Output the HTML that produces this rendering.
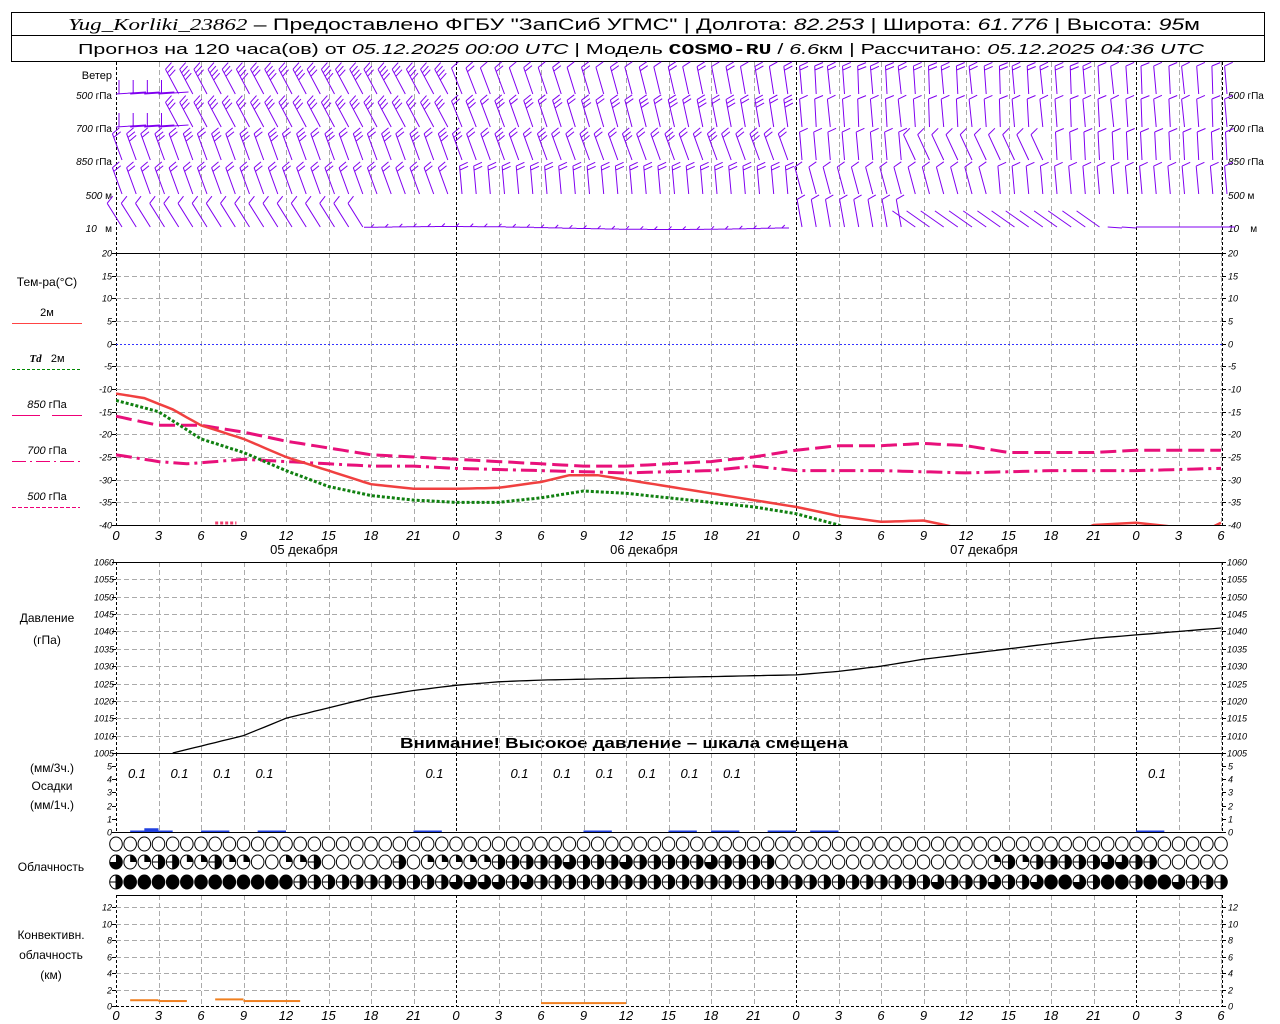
<!DOCTYPE html>
<html><head><meta charset="utf-8">
<style>
html,body{margin:0;padding:0;background:#fff;width:1280px;height:1024px;overflow:hidden}
svg{display:block}
text{font-family:"Liberation Sans","DejaVu Sans",sans-serif;fill:#000}
.it{font-style:italic}
.sm{font-size:10px}
.ax{font-size:9px;font-style:italic}
.hr{font-size:13px;font-style:italic}
</style></head><body>
<svg id="s" width="1280" height="1024" viewBox="0 0 1280 1024" xmlns="http://www.w3.org/2000/svg">
<rect x="11.5" y="12.5" width="1253" height="49" fill="none" stroke="#000"/>
<line x1="11" y1="35.5" x2="1265" y2="35.5" stroke="#000"/>
<text x="68" y="30" font-size="17" textLength="1132" lengthAdjust="spacingAndGlyphs"><tspan font-family="Liberation Serif,serif" font-style="italic">Yug_Korliki_23862</tspan> – Предоставлено ФГБУ "ЗапСиб УГМС" | Долгота: <tspan font-style="italic">82.253</tspan> | Широта: <tspan font-style="italic">61.776</tspan> | Высота: <tspan font-style="italic">95</tspan>м</text>
<text x="78" y="54" font-size="15" textLength="1126" lengthAdjust="spacingAndGlyphs">Прогноз на 120 часа(ов) от <tspan font-style="italic">05.12.2025 00:00 UTC</tspan> | Модель <tspan font-family="Liberation Mono,monospace" font-weight="bold">COSMO-RU</tspan> / <tspan font-style="italic">6.6</tspan>км | Рассчитано: <tspan font-style="italic">05.12.2025 04:36 UTC</tspan></text>

<g class="sm">
<text x="112" y="79" text-anchor="end" font-size="11">Ветер</text>
<text x="112" y="99" text-anchor="end" class="sm"><tspan font-style="italic">500</tspan> гПа</text>
<text x="112" y="132" text-anchor="end"><tspan font-style="italic">700</tspan> гПа</text>
<text x="112" y="165" text-anchor="end"><tspan font-style="italic">850</tspan> гПа</text>
<text x="112" y="199" text-anchor="end"><tspan font-style="italic">500</tspan> м</text>
<text x="112" y="232" text-anchor="end"><tspan font-style="italic">10</tspan>&#160;&#160; м</text>
<text x="1228" y="99"><tspan font-style="italic">500</tspan> гПа</text>
<text x="1228" y="132"><tspan font-style="italic">700</tspan> гПа</text>
<text x="1228" y="165"><tspan font-style="italic">850</tspan> гПа</text>
<text x="1228" y="199"><tspan font-style="italic">500</tspan> м</text>
<text x="1228" y="232"><tspan font-style="italic">10</tspan>&#160;&#160;&#160; м</text>
</g>

<g font-size="11">
<text x="47" y="286" text-anchor="middle" font-size="12">Тем-ра(°С)</text>
<text x="47" y="316" text-anchor="middle">2м</text>
<text x="47" y="362" text-anchor="middle"><tspan font-style="italic" font-weight="bold" font-family="Liberation Serif,serif">Td</tspan>&#160;&#160; 2м</text>
<text x="47" y="408" text-anchor="middle"><tspan font-style="italic">850</tspan> гПа</text>
<text x="47" y="454" text-anchor="middle"><tspan font-style="italic">700</tspan> гПа</text>
<text x="47" y="500" text-anchor="middle"><tspan font-style="italic">500</tspan> гПа</text>
<text x="47" y="622" text-anchor="middle" font-size="12">Давление</text>
<text x="47" y="644" text-anchor="middle" font-size="12">(гПа)</text>
<text x="52" y="772" text-anchor="middle" font-size="12">(мм/3ч.)</text>
<text x="52" y="790" text-anchor="middle" font-size="12">Осадки</text>
<text x="52" y="809" text-anchor="middle" font-size="12">(мм/1ч.)</text>
<text x="51" y="871" text-anchor="middle" font-size="12">Облачность</text>
<text x="51" y="939" text-anchor="middle" font-size="12">Конвективн.</text>
<text x="51" y="959" text-anchor="middle" font-size="12">облачность</text>
<text x="51" y="979" text-anchor="middle" font-size="12">(км)</text>
</g>
<g stroke-width="1">
<line x1="12" y1="323.5" x2="82" y2="323.5" stroke="#f44"/>
<line x1="12" y1="369.5" x2="80" y2="369.5" stroke="#080" stroke-dasharray="3,2"/>
<line x1="12" y1="415.5" x2="40" y2="415.5" stroke="#e07"/><line x1="52" y1="415.5" x2="82" y2="415.5" stroke="#e07"/>
<line x1="12" y1="461.5" x2="80" y2="461.5" stroke="#e07" stroke-dasharray="14,4,2,4"/>
<line x1="12" y1="507.5" x2="80" y2="507.5" stroke="#e07" stroke-dasharray="4,2"/>
</g>
<text x="400" y="748" font-size="15" font-weight="bold" textLength="448" lengthAdjust="spacingAndGlyphs">Внимание! Высокое давление – шкала смещена</text>
<text x="304" y="554" text-anchor="middle" font-size="13">05 декабря</text>
<text x="644" y="554" text-anchor="middle" font-size="13">06 декабря</text>
<text x="984" y="554" text-anchor="middle" font-size="13">07 декабря</text>
<g id="dyn"></g>
</svg>
<script>
(function(){
var NS="http://www.w3.org/2000/svg",g=document.getElementById("dyn");
function el(t,a,txt){var e=document.createElementNS(NS,t);for(var k in a)e.setAttribute(k,a[k]);if(txt!=null)e.textContent=txt;g.appendChild(e);return e;}
function X(h){return 116+h*14.1667;}
function line(x1,y1,x2,y2,c,da,w){var a={x1:x1,y1:y1,x2:x2,y2:y2,stroke:c,"stroke-width":w||1};if(da)a["stroke-dasharray"]=da;return el("line",a);}
var GR="#aaa";
// panels vertical grid
var spans=[[62,253],[253,525],[562,753],[753,832],[895,1006]];
for(var h=0;h<=78;h+=3){var x=Math.round(X(h))+.5;var day=(h%24==0);
 spans.forEach(function(s){line(x,s[0],x,s[1],day?"#000":GR,day?"3,2":"5,3");});}
// right border
[[62,253],[253,525],[562,753],[753,832],[895,1006]].forEach(function(s){line(1222.5,s[0],1222.5,s[1],"#000","3,2");});
// temp grid
function TY(t){return 343.7-t*4.533;}
for(var t=-40;t<=20;t+=5){var y=Math.round(TY(t))+.5;
 if(t==0)line(116,y,1222,y,"#33f","2,2");else if(t>-40&&t<20)line(116,y,1222,y,GR,"5,3");
 line(112,y,116,y,"#000");line(1222,y,1226,y,"#000");
 el("text",{x:112,y:y+3,"text-anchor":"end","class":"ax"},t);el("text",{x:1228,y:y+3,"class":"ax"},t);}
line(116,253.5,1222,253.5,"#000");line(116,525.5,1222,525.5,"#000");
// pressure
function PY(p){return 753-(p-1005)*3.4727;}
for(var p=1005;p<=1060;p+=5){var y=Math.round(PY(p))+.5;
 if(p>1005&&p<1060)line(116,y,1222,y,GR,"5,3");
 line(112,y,116,y,"#000");line(1222,y,1226,y,"#000");
 el("text",{x:114,y:y+3,"text-anchor":"end","class":"ax","font-size":"8"},p);el("text",{x:1227,y:y+3,"class":"ax","font-size":"8"},p);}
line(116,562.5,1222,562.5,"#000");line(116,753.5,1222,753.5,"#000");
// precip
function RY(v){return 832-v*13.2;}
for(var v=0;v<=5;v++){var y=Math.round(RY(v))+.5;line(112,y,116,y,"#000");line(1222,y,1226,y,"#000");
 el("text",{x:112,y:y+3,"text-anchor":"end","class":"ax"},v);el("text",{x:1228,y:y+3,"class":"ax"},v);}
line(116,832.5,1222,832.5,"#000");
[0,3,6,9,21,27,30,33,36,39,42,72].forEach(function(h){el("text",{x:X(h)+21,y:778,"text-anchor":"middle","class":"hr","font-size":"12"},"0.1");});
[[1,4,1],[2,3,2.5],[6,8,1],[10,12,1],[21,23,1],[33,35,1],[39,41,1],[42,44,1],[46,48,1],[49,51,1],[72,74,1]].forEach(function(b){el("rect",{x:X(b[0]),y:832-b[2]*1.5,width:X(b[1])-X(b[0]),height:b[2]*1.5,fill:"#2040e0"});});
// conv
function CY(k){return 1006-k*8.25;}
for(var k=0;k<=12;k+=2){var y=Math.round(CY(k))+.5;if(k>0)line(116,y,1222,y,GR,"5,3");
 line(112,y,116,y,"#000");line(1222,y,1226,y,"#000");
 el("text",{x:112,y:y+3,"text-anchor":"end","class":"ax"},k);el("text",{x:1228,y:y+3,"class":"ax"},k);}
line(116,895.5,1222,895.5,"#000");line(116,1006.5,1222,1006.5,"#000","3,2");
[[1,3,.7],[3,5,.6],[7,9,.8],[9,13,.6],[30,36,.35]].forEach(function(b){el("rect",{x:X(b[0]),y:CY(b[2])-1,width:X(b[1])-X(b[0]),height:2,fill:"#f08020"});});
// hour labels
for(var h=0;h<=78;h+=3){var lab=h%24;el("text",{x:X(h),y:540,"text-anchor":"middle","class":"hr"},lab);el("text",{x:X(h),y:1020,"text-anchor":"middle","class":"hr"},lab);}
// curves
function interp(pts,h){for(var i=0;i<pts.length-1;i++){if(h>=pts[i][0]&&h<=pts[i+1][0]){var f=(h-pts[i][0])/(pts[i+1][0]-pts[i][0]);return pts[i][1]+f*(pts[i+1][1]-pts[i][1]);}}return null;}
function path(pts,fy,h0,h1){var d="";for(var h=h0;h<=h1+1e-6;h+=0.5){var v=interp(pts,h);if(v==null)continue;var y=fy(v);d+=(d?"L":"M")+X(h).toFixed(1)+","+y.toFixed(1);}return d;}
var cp=el("clipPath",{id:"tc"});var r=document.createElementNS(NS,"rect");r.setAttribute("x",116);r.setAttribute("y",253);r.setAttribute("width",1106);r.setAttribute("height",272);cp.appendChild(r);
var T2=[[0,-11],[2,-12],[4,-14.5],[6,-18],[9,-21],[12,-25],[15,-28],[18,-31],[21,-32],[24,-32],[27,-31.8],[30,-30.5],[32,-29],[34,-29],[36,-30],[39,-31.5],[42,-33],[45,-34.5],[48,-36],[51,-38],[54,-39.3],[57,-39],[60,-41],[66,-44],[69,-40],[72,-39.5],[75,-40.5],[77,-41],[78,-39.5]];
var TD=[[0,-12.5],[3,-15],[6,-21],[9,-24],[12,-28],[15,-31.5],[18,-33.5],[21,-34.5],[24,-35],[27,-35],[30,-34],[33,-32.5],[36,-33],[39,-34],[42,-35],[45,-36],[48,-37.5],[51,-40],[53,-43]];
var T85=[[0,-16],[3,-18],[6,-18],[9,-19.5],[12,-21.5],[15,-23],[18,-24.5],[21,-25],[24,-25.5],[27,-26],[30,-26.5],[33,-27],[36,-27],[39,-26.5],[42,-26],[45,-25],[48,-23.5],[51,-22.5],[54,-22.5],[57,-22],[60,-22.5],[63,-24],[66,-24],[69,-24],[72,-23.5],[75,-23.5],[78,-23.5]];
var T70=[[0,-24.5],[3,-26],[5,-26.5],[7,-26],[9,-25.5],[12,-26],[15,-26.5],[18,-27],[21,-27],[24,-27.5],[30,-28],[36,-28.5],[42,-28],[45,-27],[48,-28],[54,-28],[60,-28.5],[66,-28],[72,-28],[78,-27.5]];
function curve(pts,c,da,w){var a={d:path(pts,TY,0,78),fill:"none",stroke:c,"stroke-width":w,"clip-path":"url(#tc)"};if(da)a["stroke-dasharray"]=da;el("path",a);}
curve(T85,"#e8107a","16,6",3);
curve(T70,"#e8107a","16,5,3,5",3);
curve(TD,"#108010","3,2",3);
curve(T2,"#f04040",null,2.5);
el("path",{d:"M"+X(7)+",523L"+X(8.5)+",523",stroke:"#f04070","stroke-width":3,"stroke-dasharray":"3,2"});
// pressure
var PP=[[4,1005],[9,1010],[12,1015],[15,1018],[18,1021],[21,1023],[24,1024.5],[27,1025.5],[30,1026],[36,1026.5],[42,1027],[48,1027.5],[51,1028.5],[54,1030],[57,1032],[60,1033.5],[63,1035],[66,1036.5],[69,1038],[72,1039],[75,1040],[78,1041]];
el("path",{d:path(PP,PY,4,78),fill:"none",stroke:"#000","stroke-width":1.3});
// wind barbs
var PU="#8000f0",rows=[94,127,160,194,227];
function barb(x,y,a,n,L,fl){var s=Math.sin(a),c=Math.cos(a);var tx=x+s*L,ty=y-c*L;
 var d="M"+x.toFixed(1)+","+y+"L"+tx.toFixed(1)+","+ty.toFixed(1);
 var th=70*Math.PI/180,dx=s,dy=-c;var fx=dx*Math.cos(th)-dy*Math.sin(th),fy=dx*Math.sin(th)+dy*Math.cos(th);
 for(var i=0;i<n;i++){var px=tx-s*i*4,py=ty+c*i*4;d+="M"+px.toFixed(1)+","+py.toFixed(1)+"L"+(px+fx*fl).toFixed(1)+","+(py+fy*fl).toFixed(1);}
 return d;}
var D="";
for(var ri=0;ri<5;ri++){for(var h=0;h<=78;h++){var x=X(h),y=rows[ri];var a,n;
 var base=(h<24?-28:(h<48?-22+ (h-24)*0.6:-6+((h*7)%5)));
 if(ri==0){a=base;n=h<24?3+(h%2):(h<48?1+(h%2):(h>68?1:2));}
 else if(ri==1){a=base;n=h<24?3:(h<48?2+(h%2):1);}
 else if(ri==2){a=(h<48?-20:(h<56?-5:(h<66?-25:-3)));n=h<24?2+(h%2):(h<48?2+(h%3==0?1:0):1);}
 else if(ri==3){a=(h<24?-20:(h<48?-5:(h<62?-15:-5)));n=h<48?2:1;}
 else{ if(h<18){a=-32;n=1;} else if(h<48){a=-84;n=1;} else if(h<56){a=-10;n=1;} else if(h<70){a=-55;n=0;} else {a=-85;n=0;} }
 if(ri==4&&h>=70){D+="M"+x.toFixed(1)+","+y+"L"+(x+14.2).toFixed(1)+","+(y+(h<72?1:0));continue;}
 if(ri==4&&h>=18&&h<48){var yy=y+1+Math.sin(h/5)*1.5;D+="M"+(x-7).toFixed(1)+","+yy.toFixed(1)+"L"+(x+7.2).toFixed(1)+","+yy.toFixed(1)+"M"+x.toFixed(1)+","+yy.toFixed(1)+"L"+(x+3).toFixed(1)+","+(yy-3).toFixed(1);continue;}
 if(ri<2&&h<4){D+="M"+x.toFixed(1)+","+y+"L"+(x+30)+","+(y-2)+"M"+(x+3)+","+y+"L"+(x+3)+","+(y-14);continue;}
 D+=barb(x+6,y,a*Math.PI/180,n,28,9);}}
el("path",{d:D,fill:"none",stroke:PU,"stroke-width":1});
// cloud circles
var r2=[3,1,1,2,2,1,1,2,1,1,0,0,1,1,2,0,0,0,0,0,2,0,1,1,1,1,1,2,2,2,2,2,3,2,2,2,3,2,2,2,2,2,3,2,2,2,2,0,0,0,0,0,0,0,0,0,0,0,0,0,0,0,1,2,1,2,2,2,2,2,3,3,2,2,0,0,0,0,0];
var r3=[2,4,4,4,4,4,4,4,4,4,4,4,4,2,2,2,2,2,2,2,2,2,2,2,3,3,3,3,2,3,2,2,2,2,2,2,2,2,2,2,2,2,2,2,2,2,2,2,2,2,2,2,2,2,2,2,2,2,3,2,2,2,3,2,2,3,4,4,3,2,4,4,2,4,4,3,2,2,2];
function circ(cx,cy,f){var rx=6.3,ry=7;
 if(f==4){el("ellipse",{cx:cx,cy:cy,rx:rx,ry:ry,fill:"#000",stroke:"#000"});return;}
 if(f==2){el("path",{d:"M"+cx+","+(cy-ry)+"A"+rx+","+ry+" 0 0 1 "+cx+","+(cy+ry)+"Z",fill:"#000"});}
 else if(f==1){el("path",{d:"M"+cx+","+cy+"L"+cx+","+(cy-ry)+"A"+rx+","+ry+" 0 0 1 "+(cx+rx)+","+cy+"Z",fill:"#000"});}
 else if(f==3){el("path",{d:"M"+cx+","+cy+"L"+cx+","+(cy-ry)+"A"+rx+","+ry+" 0 1 1 "+(cx-rx)+","+cy+"Z",fill:"#000"});}
 el("ellipse",{cx:cx,cy:cy,rx:rx,ry:ry,fill:"none",stroke:"#000","stroke-width":1});
 if(f==2){line(cx,cy-ry,cx,cy+ry,"#000");line(cx-rx,cy,cx,cy,"#000");}}
for(var i=0;i<=78;i++){var cx=X(i);circ(cx,844,0);circ(cx,862,r2[i]);circ(cx,882,r3[i]);}
})();
</script>
</body></html>
